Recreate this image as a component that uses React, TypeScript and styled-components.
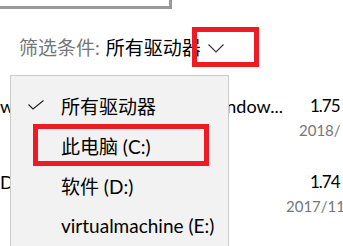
import styled, { createGlobalStyle } from 'styled-components';

const GlobalStyle = createGlobalStyle`
  html, body {
    margin: 0;
    padding: 0;
    background: #fff;
  }
  body {
    width: 343px;
    height: 246px;
    overflow: hidden;
    font-family: Lato, 'Noto Sans CJK SC', sans-serif;
    color: #000;
  }
`;

interface IFile {
  head: string;
  tail: string;
  size: string;
  date: string;
  indent: number;
}

const files: IFile[] = [
  { head: 'w', tail: 'ndow...', size: '1.75', date: '2018/', indent: 13 },
  { head: 'D', tail: '', size: '1.74', date: '2017/11', indent: 0 },
];

const drives = ['所有驱动器', '此电脑 (C:)', '软件 (D:)', 'virtualmachine (E:)'];

function App() {
  return (
    <StyledPage>
      <GlobalStyle />
      <StyledPanelEdge />
      <StyledFilter>
        <StyledLabel>筛选条件:</StyledLabel>
        <StyledValue>所有驱动器</StyledValue>
        <StyledToggle>
          <svg width="16" height="9" viewBox="0 0 16 9">
            <path d="M0.5 0.5 L8 8 L15.5 0.5" fill="none" stroke="#333" strokeWidth="1.1" />
          </svg>
          <StyledMark />
        </StyledToggle>
      </StyledFilter>

      <StyledList>
        {files.map((file) => (
          <StyledRow key={file.size}>
            <StyledName>
              <span>{file.head}</span>
              <span>{file.tail}</span>
            </StyledName>
            <StyledMeta>
              <StyledSize>{file.size}</StyledSize>
              <StyledDate $indent={file.indent}>{file.date}</StyledDate>
            </StyledMeta>
          </StyledRow>
        ))}

        <StyledMenu>
          {drives.map((drive, i) => (
            <StyledItem key={drive}>
              <StyledCheck>
                {i === 0 && (
                  <svg width="16" height="10" viewBox="0 0 16 10">
                    <path d="M0.5 4.5 L5 9 L15.5 0.5" fill="none" stroke="#222" strokeWidth="1.1" />
                  </svg>
                )}
              </StyledCheck>
              {drive}
              {i === 1 && <StyledItemMark />}
            </StyledItem>
          ))}
        </StyledMenu>
      </StyledList>
    </StyledPage>
  );
}

const StyledPage = styled.div`
  position: relative;
  width: 343px;
  height: 246px;
  overflow: hidden;
`;

const StyledPanelEdge = styled.div`
  box-sizing: border-box;
  width: 172px;
  height: 9px;
  border-right: 3px solid #999;
  border-bottom: 3px solid #999;
`;

const StyledFilter = styled.div`
  display: flex;
  align-items: center;
  height: 26px;
  margin-top: 26px;
  padding-left: 19px;
  font-size: 19px;
  line-height: 26px;
`;

const StyledLabel = styled.span`
  color: #767676;
  margin-right: 6px;
`;

const StyledValue = styled.span`
  color: #000;
`;

const StyledToggle = styled.span`
  position: relative;
  display: flex;
  align-items: center;
  margin-left: 7px;

  svg {
    display: block;
  }
`;

const StyledMark = styled.span`
  position: absolute;
  left: -16px;
  top: -17px;
  width: 67px;
  height: 40px;
  box-sizing: border-box;
  border: 5px solid #ed1c24;
`;

const StyledList = styled.div`
  position: relative;
  margin-top: 32px;
`;

const StyledRow = styled.div`
  display: flex;
  justify-content: space-between;
  height: 76px;
`;

const StyledName = styled.div`
  display: flex;
  justify-content: space-between;
  width: 283px;
  height: 26px;
  line-height: 26px;
  font-size: 18px;
  white-space: nowrap;
`;

const StyledMeta = styled.div`
  display: flex;
  flex-direction: column;
  width: 57px;
  overflow: hidden;
`;

const StyledSize = styled.div`
  height: 26px;
  line-height: 26px;
  padding-left: 24px;
  font-size: 17px;
  letter-spacing: -1px;
  white-space: nowrap;
`;

const StyledDate = styled.div<{ $indent: number }>`
  height: 22px;
  line-height: 22px;
  padding-left: ${(props) => props.$indent}px;
  font-size: 15px;
  color: #767676;
  white-space: nowrap;
`;

const StyledMenu = styled.div`
  position: absolute;
  left: 10px;
  top: -18px;
  width: 219px;
  height: 200px;
  padding-top: 9px;
  box-sizing: border-box;
  background: #f2f2f2;
  border: 1px solid #cccccc;
`;

const StyledItem = styled.div`
  position: relative;
  display: flex;
  align-items: center;
  height: 40px;
  font-size: 19px;
  white-space: nowrap;
`;

const StyledCheck = styled.span`
  display: flex;
  width: 33px;
  padding-left: 17px;

  svg {
    display: block;
  }
`;

const StyledItemMark = styled.span`
  position: absolute;
  left: 22px;
  top: -1px;
  width: 176px;
  height: 42px;
  box-sizing: border-box;
  border: 5px solid #ed1c24;
`;

export default App;
